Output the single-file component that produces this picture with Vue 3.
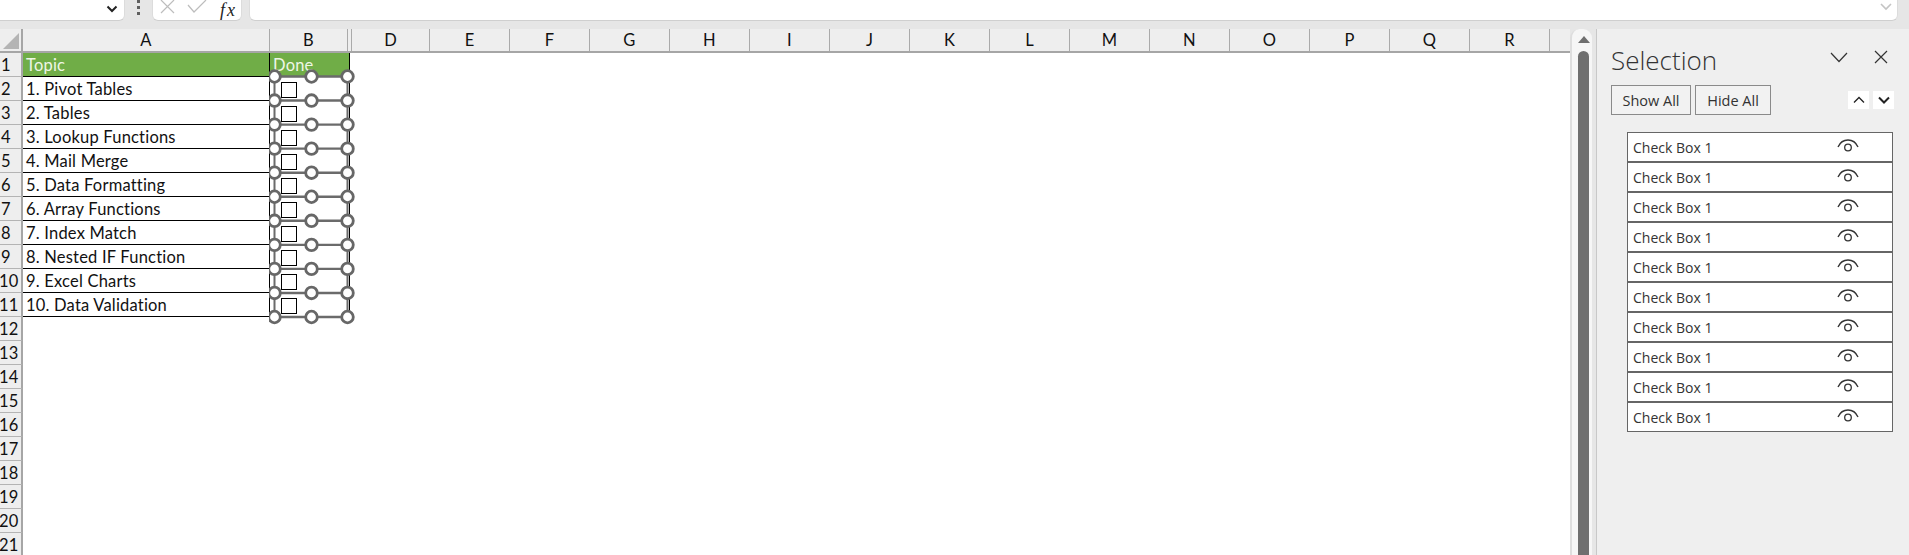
<script setup>
const topics = ['1. Pivot Tables','2. Tables','3. Lookup Functions','4. Mail Merge','5. Data Formatting','6. Array Functions','7. Index Match','8. Nested IF Function','9. Excel Charts','10. Data Validation']
const cols = ['D','E','F','G','H','I','J','K','L','M','N','O','P','Q','R']
const blanks = Array.from({ length: 10 }, (_, i) => i + 12)
const boxes = Array.from({ length: 10 }, (_, i) => i)
const handleRows = Array.from({ length: 11 }, (_, i) => 8.5 + i * 24.05)
const handleCols = [5.5, 42.5, 78.5]
</script>

<template>
  <div class="app">
    <div class="topbar">
      <div class="namebox">
        <svg class="nb-chev" width="12" height="8" viewBox="0 0 12 8"><path d="M1.5 1.5 6 6l4.5-4.5" fill="none" stroke="#222" stroke-width="2"/></svg>
      </div>
      <div class="dots"><i></i><i></i><i></i></div>
      <div class="fxbox">
        <svg width="15" height="14" viewBox="0 0 15 14"><path d="M1 0l13 13M14 0 1 13" fill="none" stroke="#bdbdbd" stroke-width="1.2"/></svg>
        <svg width="20" height="14" viewBox="0 0 20 14"><path d="M1 5l6 7L19 0" fill="none" stroke="#bdbdbd" stroke-width="1.2"/></svg>
        <span class="fx">fx</span>
      </div>
      <div class="formula">
        <svg width="12" height="8" viewBox="0 0 12 8"><path d="M1 1l5 5 5-5" fill="none" stroke="#c4c4c4" stroke-width="1.6"/></svg>
      </div>
    </div>

    <div class="main">
      <div class="sheet">
        <div class="colhead">
          <div class="corner">
            <svg width="17" height="17" viewBox="0 0 17 17"><polygon points="16,0 16,16 0,16" fill="#b4b4b4"/></svg>
          </div>
          <div class="col col-a">A</div>
          <div class="col col-b">B</div>
          <div class="col col-c"></div>
          <div class="col col-d">D</div>
          <div v-for="c in cols.slice(1)" :key="c" class="col">{{ c }}</div>
          <div class="col col-rest"></div>
        </div>

        <div class="grid">
          <div class="row">
            <div class="rh">1</div>
            <div class="cell a green">Topic</div>
            <div class="cell b green">Done</div>
          </div>
          <div v-for="(t, i) in topics" :key="t" class="row">
            <div class="rh" :class="{ two: i + 2 > 9 }">{{ i + 2 }}</div>
            <div class="cell a">{{ t }}</div>
            <div class="cell b"><span class="box"></span></div>
          </div>
          <div v-for="n in blanks" :key="n" class="row">
            <div class="rh two">{{ n }}</div>
          </div>

          <svg class="handles" width="90" height="262" viewBox="0 0 90 262">
            <path d="M5.500 8.500V249M78.500 8.500V249" stroke="#6b6b6b" stroke-width="2" fill="none"/>
            <path v-for="y in handleRows" :key="'l' + y" :d="`M5.500 ${y}H78.500`" stroke="#6b6b6b" stroke-width="2.400" fill="none"/>
            <template v-for="y in handleRows" :key="'r' + y">
              <circle v-for="x in handleCols" :key="x" :cx="x" :cy="y" r="5.800" fill="#fff" stroke="#676767" stroke-width="2.800"/>
            </template>
          </svg>
        </div>
      </div>

      <div class="scroll">
        <div class="track">
          <svg class="arrow" width="12" height="8" viewBox="0 0 12 8"><polygon points="6,0 12,7 0,7" fill="#6f6f6f"/></svg>
          <div class="thumb"></div>
        </div>
      </div>

      <aside class="panel">
        <div class="panel-head">
          <h2 class="title">Selection</h2>
          <svg class="ph-chev" width="18" height="11" viewBox="0 0 18 11"><path d="M1 1l8 8.500L17 1" fill="none" stroke="#333" stroke-width="1.200"/></svg>
          <svg class="ph-x" width="14" height="14" viewBox="0 0 14 14"><path d="M1 1l12 12M13 1 1 13" fill="none" stroke="#333" stroke-width="1.200"/></svg>
        </div>
        <div class="actions">
          <button class="btn show">Show All</button>
          <button class="btn hide">Hide All</button>
          <span class="arrow-btn first"><svg width="12" height="8" viewBox="0 0 12 8"><path d="M1 6.500l5-5 5 5" fill="none" stroke="#222" stroke-width="1.300"/></svg></span>
          <span class="arrow-btn"><svg width="12" height="8" viewBox="0 0 12 8"><path d="M1 1.500l5 5 5-5" fill="none" stroke="#222" stroke-width="2"/></svg></span>
        </div>
        <div class="list">
          <div v-for="b in boxes" :key="b" class="item">
            <span>Check Box 1</span>
            <svg class="eye" width="22" height="15" viewBox="0 0 22 15">
              <path d="M1 8C3 3.500 6.500 1 11 1s8 2.500 10 7" fill="none" stroke="#333" stroke-width="1.300"/>
              <circle cx="11" cy="8.500" r="3.300" fill="none" stroke="#333" stroke-width="1.300"/>
            </svg>
          </div>
        </div>
      </aside>
    </div>
  </div>
</template>

<style>
html, body { margin: 0; background: #fff; overflow: hidden; }
</style>

<style scoped>
.app {
  width: 1909px;
  height: 555px;
  overflow: hidden;
  display: flex;
  flex-direction: column;
  background: #e6e6e6;
  font-family: "Open Sans", "Noto Sans", sans-serif;
  color: #111;
}
.topbar {
  height: 29px;
  flex: none;
  display: flex;
  box-sizing: border-box;
  padding-bottom: 8px;
}
.namebox, .fxbox, .formula {
  height: 21px;
  box-sizing: border-box;
  background: #fff;
  border-bottom: 1px solid #cfcfcf;
  border-right: 1px solid #dcdcdc;
  border-radius: 0 0 6px 6px;
  display: flex;
  align-items: flex-start;
}
.namebox { width: 125px; border-radius: 0 0 6px 0; justify-content: flex-end; padding: 5px 6px 0 0; }
.dots { width: 27px; display: flex; flex-direction: column; align-items: center; gap: 3px; padding-top: 0; }
.dots i { width: 3px; height: 3px; background: #5f5f5f; display: block; margin-left: -1px; }
.fxbox { width: 90px; padding-left: 7px; gap: 12px; border-left: 1px solid #dcdcdc; }
.fx { font: italic 18px/20px "Liberation Serif", serif; color: #222; margin-left: 1px; letter-spacing: 2px; }
.formula {
  width: 1649px;
  margin-left: 7px;
  border-left: 1px solid #dcdcdc;
  justify-content: flex-end;
  padding: 3px 5px 0 0;
}

.main { flex: 1; display: flex; min-height: 0; }
.sheet {
  width: 1570px;
  flex: none;
  display: flex;
  flex-direction: column;
  background: #fff;
  overflow: hidden;
  font-family: Lato, "Open Sans", sans-serif;
  font-variant-ligatures: none;
  letter-spacing: 0.2px;
}
.colhead {
  height: 24px;
  flex: none;
  display: flex;
  background: #eee;
  border-bottom: 2px solid #a6a6a6;
  box-sizing: border-box;
}
.corner {
  width: 23px;
  flex: none;
  box-sizing: border-box;
  border-right: 2px solid #a6a6a6;
  padding: 4px 0 0 3px;
  display: flex;
  align-items: flex-start;
}
.col {
  width: 80px;
  flex: none;
  box-sizing: border-box;
  border-right: 1px solid #aaa;
  text-align: center;
  font-size: 16.500px;
  line-height: 22px;
  color: #111;
}
.col-a { width: 247px; }
.col-b { width: 78px; }
.col-c { width: 4px; }
.col-d { width: 78px; }
.col-rest { border-right: 0; flex: 1; }

.grid { position: relative; }
.row { height: 24px; display: flex; box-sizing: border-box; }
.rh {
  width: 23px;
  flex: none;
  box-sizing: border-box;
  background: #eee;
  border-right: 2px solid #a6a6a6;
  border-bottom: 1px solid #b4b4b4;
  padding-left: 1px;
  font-size: 16.500px;
  line-height: 24px;
  overflow: hidden;
  white-space: nowrap;
}
.rh.two { padding-left: 0; text-indent: -1px; }
.cell {
  box-sizing: border-box;
  height: 24px;
  border-bottom: 1px solid #000;
  font-size: 16.500px;
  line-height: 24px;
  padding-left: 3px;
  white-space: nowrap;
}
.cell.a { width: 246px; }
.cell.b {
  width: 81px;
  border-left: 1px solid #000;
  border-right: 1px solid #000;
  padding-left: 11px;
  padding-top: 5px;
}
.cell.b.green { padding-left: 3px; padding-top: 0; }
.green { background: #70ad47; color: #eef6e6; }
.box { display: block; width: 16px; height: 16px; box-sizing: border-box; border: 1px solid #000; background: #fff; }
.handles { position: absolute; left: 269px; top: 15px; pointer-events: none; }

.scroll { width: 26px; flex: none; background: #e6e6e6; border-right: 1px solid #c8c8c8; box-sizing: content-box; }
.track {
  width: 22px;
  height: 100%;
  box-sizing: border-box;
  background: #f6f6f6;
  border-left: 2px solid #dedede;
  border-radius: 9px 9px 0 0;
  padding: 7px 0 0 6px;
}
.arrow { display: block; margin: 0; }
.thumb { width: 11px; height: 520px; background: #6f6f6f; border-radius: 6px 6px 0 0; margin-top: 7px; }

.panel { flex: 1; background: #efefef; box-sizing: border-box; color: #333; min-width: 0; }
.panel-head { display: flex; height: 56px; padding-left: 14px; box-sizing: border-box; align-items: flex-start; }
.title { margin: 12px 0 0; font-size: 26px; line-height: 38px; font-weight: 300; color: #333; font-family: "Open Sans", sans-serif; }
.ph-chev { margin: 23px 0 0 auto; }
.ph-x { margin: 21px 21px 0 26px; }
.actions { display: flex; padding-left: 14px; align-items: center; height: 30px; }
.btn {
  height: 30px;
  box-sizing: border-box;
  border: 1px solid #8a8a8a;
  background: #f2f2f2;
  font: 14.500px "Open Sans", sans-serif;
  color: #333;
  padding: 0;
}
.show { width: 80px; }
.hide { width: 76px; margin-left: 4px; }
.arrow-btn {
  width: 21px;
  height: 18px;
  background: #fff;
  display: flex;
  align-items: center;
  justify-content: center;
  margin-left: 4px;
}
.arrow-btn.first { margin-left: 77px; }
.list { margin: 17px 0 0 30px; width: 266px; }
.item {
  height: 30px;
  box-sizing: border-box;
  background: #fff;
  border: 1px solid #666;
  display: flex;
  align-items: center;
  padding-left: 5px;
  font-size: 14px;
  color: #333;
  position: relative;
}
.eye { margin-left: auto; margin-right: 33px; margin-top: -1px; }
</style>
